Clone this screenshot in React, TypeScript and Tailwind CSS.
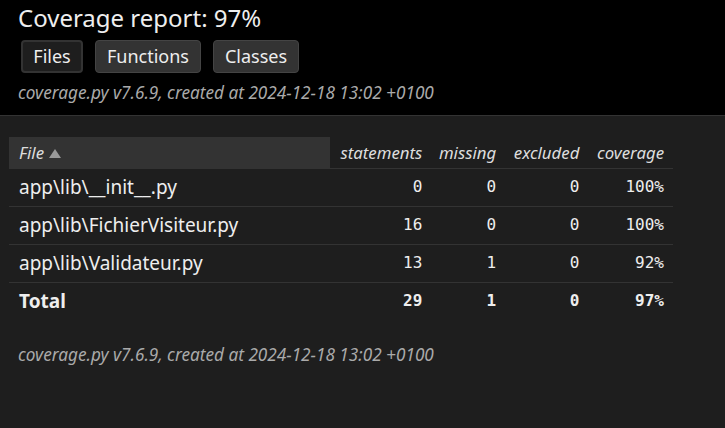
import React from "react";

const rows = [
  { f: "app\\lib\\__init__.py", s: "0", m: "0", e: "0", c: "100%" },
  { f: "app\\lib\\FichierVisiteur.py", s: "16", m: "0", e: "0", c: "100%" },
  { f: "app\\lib\\Validateur.py", s: "13", m: "1", e: "0", c: "92%" },
];

const sans = "font-['Noto_Sans','Open_Sans',sans-serif]";
const mono = "font-['DejaVu_Sans_Mono',monospace]";

export default function App() {
  return (
    <div className={`w-[725px] h-[428px] bg-[#1e1e1e] text-[#eee] ${sans} overflow-hidden`}>
      <header className="bg-black border-b border-[#333] h-[116px] pl-[18px] pt-[1px]">
        <h1 className="text-[24px] leading-[34px] text-[#eee]">Coverage report: 97%</h1>
        <nav className="flex gap-[12px] ml-[3px] mt-[5px] text-[18px]">
          <span className="h-[33px] w-[62px] justify-center flex items-center rounded-[4px] border-2 border-[#333] bg-[#1e1e1e]">Files</span>
          <span className="h-[33px] w-[106px] justify-center flex items-center rounded-[4px] border border-[#444] bg-[#333]">Functions</span>
          <span className="h-[33px] w-[86px] justify-center flex items-center rounded-[4px] border border-[#444] bg-[#333]">Classes</span>
        </nav>
        <p className="italic text-[17.2px] leading-[22px] mt-[9px] text-[#aaa]">
          coverage.py v7.6.9, created at 2024-12-18 13:02 +0100
        </p>
      </header>
      <main className="pl-[9px] pt-[21px]">
        <table className="border-collapse w-[664px]">
          <thead>
            <tr className="h-[31px] italic text-[16.8px] text-[#ddd] border-b border-[#333]">
              <th className="font-normal text-left pl-[10px] bg-[#333] w-[321px]">
                <span className="inline-flex items-center">
                  File
                  <svg width="12" height="9" viewBox="0 0 12 9" className="ml-[5px] mt-[2px]">
                    <polygon points="6,0 12,9 0,9" fill="#999" />
                  </svg>
                </span>
              </th>
              <th className="font-normal text-right pr-[9px]">statements</th>
              <th className="font-normal text-right pr-[9px]">missing</th>
              <th className="font-normal text-right pr-[9px]">excluded</th>
              <th className="font-normal text-right pr-[9px]">coverage</th>
            </tr>
          </thead>
          <tbody>
            {rows.map((r) => (
              <tr key={r.f} className="h-[38px] border-b border-[#333]">
                <td className="pl-[10px] text-[19px]">{r.f}</td>
                <td className={`text-right pr-[9px] text-[16px] ${mono}`}>{r.s}</td>
                <td className={`text-right pr-[9px] text-[16px] ${mono}`}>{r.m}</td>
                <td className={`text-right pr-[9px] text-[16px] ${mono}`}>{r.e}</td>
                <td className={`text-right pr-[9px] text-[16px] ${mono}`}>{r.c}</td>
              </tr>
            ))}
            <tr className="h-[38px] font-bold">
              <td className="pl-[10px] text-[19px]">Total</td>
              <td className={`text-right pr-[9px] text-[16px] ${mono}`}>29</td>
              <td className={`text-right pr-[9px] text-[16px] ${mono}`}>1</td>
              <td className={`text-right pr-[9px] text-[16px] ${mono}`}>0</td>
              <td className={`text-right pr-[9px] text-[16px] ${mono}`}>97%</td>
            </tr>
          </tbody>
        </table>
        <p className="italic text-[17.2px] text-[#aaa] mt-[22px] ml-[9px]">
          coverage.py v7.6.9, created at 2024-12-18 13:02 +0100
        </p>
      </main>
    </div>
  );
}
